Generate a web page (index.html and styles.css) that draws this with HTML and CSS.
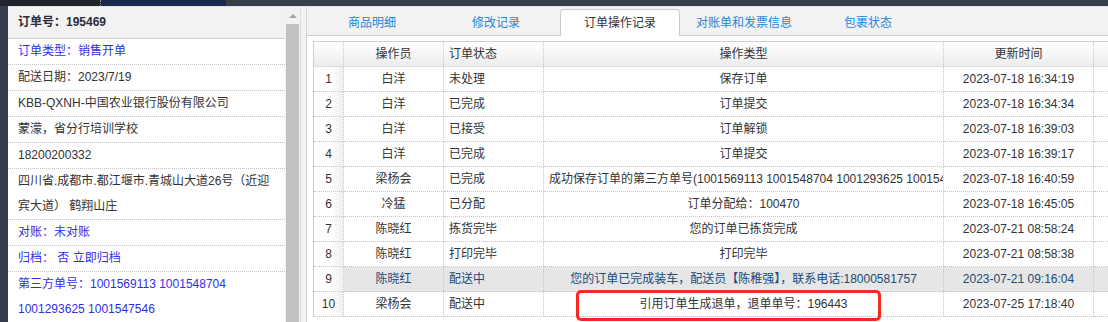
FILE: index.html
```html
<!DOCTYPE html>
<html lang="zh-CN">
<head>
    <meta charset="UTF-8">
    <title>订单操作记录</title>
    <link rel="stylesheet" href="styles.css">
</head>
<body>

    <div class="topbar">
        <span class="seg seg-a"></span>
        <span class="seg seg-b"></span>
        <span class="seg seg-c"></span>
    </div>

    <div class="main">
        <div class="side">
            <div class="info">
                <div class="info-title">订单号：195469</div>
                <div class="info-row blue">订单类型：销售开单</div>
                <div class="info-row">配送日期：2023/7/19</div>
                <div class="info-row">KBB-QXNH-中国农业银行股份有限公司</div>
                <div class="info-row">蒙濛，省分行培训学校</div>
                <div class="info-row">18200200332</div>
                <div class="info-row">四川省.成都市.都江堰市.青城山大道26号（近迎宾大道） 鹤翔山庄</div>
                <div class="info-row blue">对账：未对账</div>
                <div class="info-row blue">归档： 否 立即归档</div>
                <div class="info-row blue last">第三方单号：1001569113 1001548704 1001293625 1001547546</div>
            </div>
            <div class="scrollbar">
                <div class="scroll-up"><span class="arrow"></span></div>
                <div class="scroll-thumb"></div>
            </div>
        </div>

        <div class="splitter"></div>

        <div class="panel">
            <div class="tabs">
                <div class="tab">商品明细</div>
                <div class="tab">修改记录</div>
                <div class="tab active">订单操作记录</div>
                <div class="tab">对账单和发票信息</div>
                <div class="tab">包裹状态</div>
            </div>

            <div class="tab-body">
                <div class="grid">
                    <div class="grid-row head">
                        <div class="cell num"></div>
                        <div class="cell center">操作员</div>
                        <div class="cell">订单状态</div>
                        <div class="cell center">操作类型</div>
                        <div class="cell center">更新时间</div>
                        <div class="cell filler"></div>
                    </div>
                    <div class="grid-row">
                        <div class="cell num">1</div>
                        <div class="cell center">白洋</div>
                        <div class="cell">未处理</div>
                        <div class="cell center">保存订单</div>
                        <div class="cell center">2023-07-18 16:34:19</div>
                        <div class="cell filler"></div>
                    </div>
                    <div class="grid-row">
                        <div class="cell num">2</div>
                        <div class="cell center">白洋</div>
                        <div class="cell">已完成</div>
                        <div class="cell center">订单提交</div>
                        <div class="cell center">2023-07-18 16:34:34</div>
                        <div class="cell filler"></div>
                    </div>
                    <div class="grid-row">
                        <div class="cell num">3</div>
                        <div class="cell center">白洋</div>
                        <div class="cell">已接受</div>
                        <div class="cell center">订单解锁</div>
                        <div class="cell center">2023-07-18 16:39:03</div>
                        <div class="cell filler"></div>
                    </div>
                    <div class="grid-row">
                        <div class="cell num">4</div>
                        <div class="cell center">白洋</div>
                        <div class="cell">已完成</div>
                        <div class="cell center">订单提交</div>
                        <div class="cell center">2023-07-18 16:39:17</div>
                        <div class="cell filler"></div>
                    </div>
                    <div class="grid-row">
                        <div class="cell num">5</div>
                        <div class="cell center">梁杨会</div>
                        <div class="cell">已完成</div>
                        <div class="cell center">成功保存订单的第三方单号(1001569113 1001548704 1001293625 1001547546)</div>
                        <div class="cell center">2023-07-18 16:40:59</div>
                        <div class="cell filler"></div>
                    </div>
                    <div class="grid-row">
                        <div class="cell num">6</div>
                        <div class="cell center">冷猛</div>
                        <div class="cell">已分配</div>
                        <div class="cell center">订单分配给：100470</div>
                        <div class="cell center">2023-07-18 16:45:05</div>
                        <div class="cell filler"></div>
                    </div>
                    <div class="grid-row">
                        <div class="cell num">7</div>
                        <div class="cell center">陈晓红</div>
                        <div class="cell">拣货完毕</div>
                        <div class="cell center">您的订单已拣货完成</div>
                        <div class="cell center">2023-07-21 08:58:24</div>
                        <div class="cell filler"></div>
                    </div>
                    <div class="grid-row">
                        <div class="cell num">8</div>
                        <div class="cell center">陈晓红</div>
                        <div class="cell">打印完毕</div>
                        <div class="cell center">打印完毕</div>
                        <div class="cell center">2023-07-21 08:58:38</div>
                        <div class="cell filler"></div>
                    </div>
                    <div class="grid-row hover">
                        <div class="cell num">9</div>
                        <div class="cell center">陈晓红</div>
                        <div class="cell">配送中</div>
                        <div class="cell center">您的订单已完成装车，配送员【陈稚强】，联系电话:18000581757</div>
                        <div class="cell center">2023-07-21 09:16:04</div>
                        <div class="cell filler"></div>
                    </div>
                    <div class="grid-row">
                        <div class="cell num">10</div>
                        <div class="cell center">梁杨会</div>
                        <div class="cell">配送中</div>
                        <div class="cell center">引用订单生成退单，退单单号：196443</div>
                        <div class="cell center">2023-07-25 17:18:40</div>
                        <div class="cell filler"></div>
                    </div>
                </div>
            </div>
        </div>
    </div>

    <!-- annotation drawn over the last row -->
    <div class="mark"></div>

</body>
</html>
```

FILE: styles.css
```css
body {
    margin: 0;
    padding: 0;
    font-family: 'Liberation Sans', 'Noto Sans CJK SC', sans-serif;
    font-size: 12px;
    color: #333;
    background: #343f4b;
    height: 322px;
    overflow: hidden;
}

.topbar {
    display: flex;
    height: 6px;
}

.seg-a {
    width: 100px;
    background: #20252c;
    border-right: 1px dotted #8a9099;
}

.seg-b {
    width: 125px;
    background: #172b4e;
}

.seg-c {
    flex: 1;
    background: #343f4b;
}

.main {
    display: flex;
    height: 316px;
    margin-left: 8px;
    border-top: 1px solid #e4e4e4;
    box-sizing: border-box;
}

/* left order summary */
.side {
    display: flex;
    width: 293px;
    background: #fff;
    border-right: 1px solid #dcdcdc;
    box-sizing: border-box;
}

.info {
    width: 277px;
    overflow: hidden;
}

.info-title {
    height: 31px;
    line-height: 31px;
    padding: 0 10px;
    background: #f2f2f2;
    border-bottom: 1px solid #cfcfcf;
    font-weight: bold;
    color: #2b2d3a;
}

.info-row {
    padding: 0 10px;
    line-height: 25px;
    border-bottom: 1px dotted #c4c4c4;
}

.info-row.blue {
    color: #2f2fe8;
}

.info-row.last {
    border-bottom: none;
}

.scrollbar {
    width: 15px;
    background: #f1f1f1;
}

.scroll-up {
    height: 17px;
    display: flex;
    justify-content: center;
    align-items: center;
}

.arrow {
    width: 0;
    height: 0;
    border-left: 4px solid transparent;
    border-right: 4px solid transparent;
    border-bottom: 4px solid #a3a3a3;
}

.scroll-thumb {
    height: 300px;
    margin: 0 1px;
    background: #c1c1c1;
}

.splitter {
    width: 5px;
    background: #f2f2f2;
}

/* right tabbed panel */
.panel {
    flex: 1;
    background: #fff;
    border-left: 1px solid #d4d4d4;
    overflow: hidden;
}

.tabs {
    display: flex;
    align-items: flex-end;
    height: 28px;
    padding-left: 5px;
    background: #f2f2f2;
    border-bottom: 1px solid #cccccc;
}

.tab {
    width: 118px;
    height: 26px;
    line-height: 27px;
    margin-right: 4px;
    margin-bottom: -1px;
    text-align: center;
    color: #1f87d3;
    border: 1px solid transparent;
    border-bottom: none;
    border-radius: 4px 4px 0 0;
}

.tab.active {
    background: #fff;
    color: #333;
    border-color: #cccccc;
}

.tab-body {
    padding: 5px 0 0 6px;
}

.grid {
    border-top: 1px solid #cfcfcf;
    border-left: 1px solid #cfcfcf;
}

.grid-row {
    display: grid;
    grid-template-columns: 30px 100px 100px 400px 150px 1fr;
    height: 25px;
}

.cell {
    box-sizing: border-box;
    padding: 0 5px;
    line-height: 24px;
    white-space: nowrap;
    overflow: hidden;
    border-right: 1px dotted #c4c4c4;
    border-bottom: 1px dotted #c4c4c4;
}

.center {
    text-align: center;
}

.cell.num {
    padding: 0;
    text-align: center;
    background: linear-gradient(to right, #ffffff, #ffffff 60%, #efefef);
}

.cell.filler {
    border-right: none;
}

.head .cell {
    background: linear-gradient(#ffffff, #ececec);
    border-bottom: 1px solid #dddddd;
}

.hover .cell {
    background: #e6e6e6;
    color: #21497a;
}

.hover .cell.num {
    background: linear-gradient(to right, #ffffff, #ffffff 60%, #efefef);
    color: #333;
}

.mark {
    position: absolute;
    left: 576px;
    top: 290px;
    width: 299px;
    height: 25px;
    border: 3px solid #f52a1f;
    border-radius: 5px;
}
```
